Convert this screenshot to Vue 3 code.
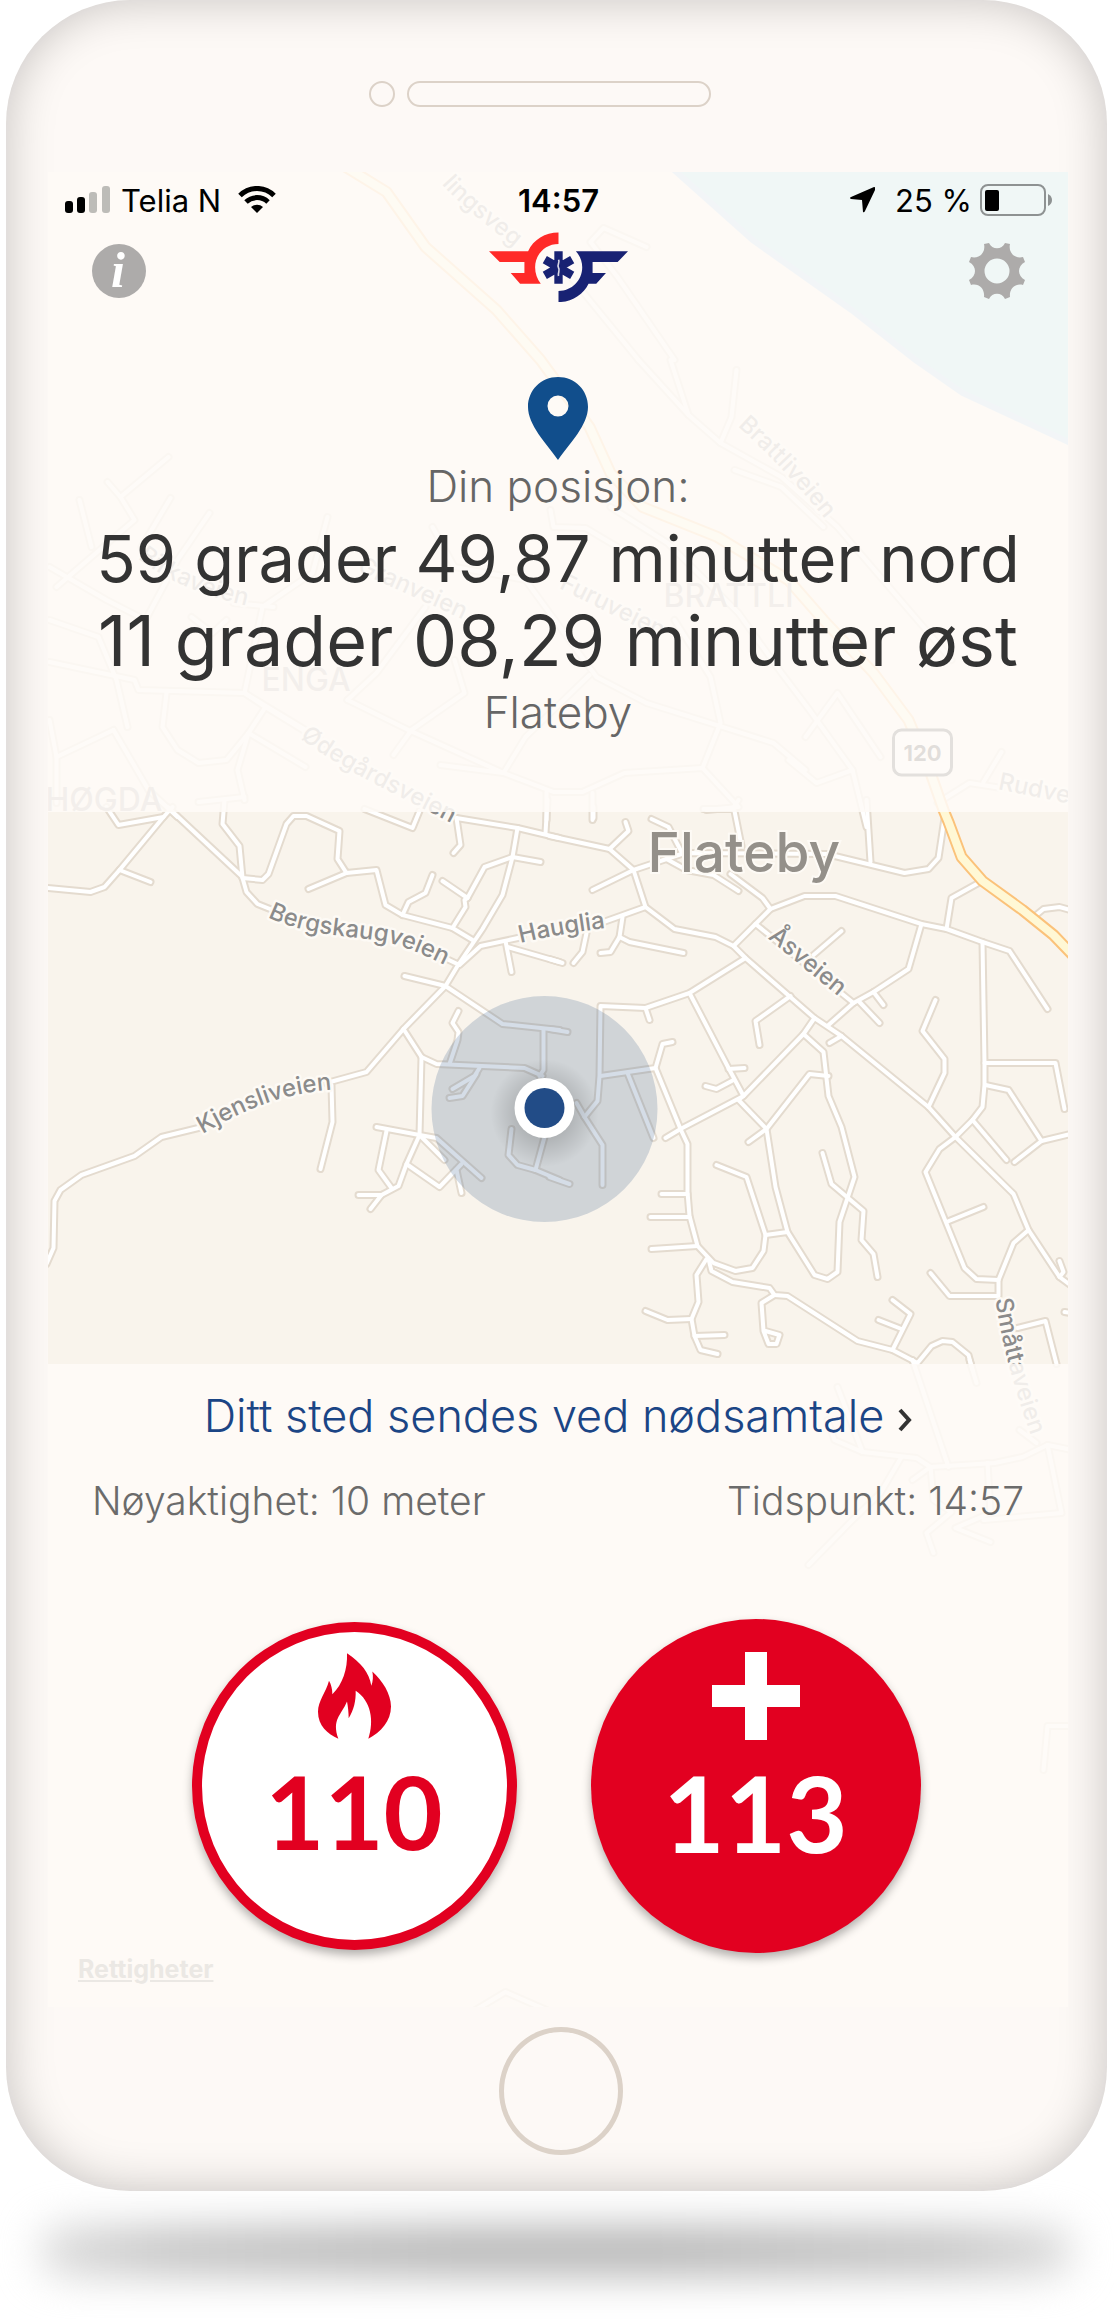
<script setup>
// Each tile keeps its roads in its own survey grid: origin plus scale give map units.
const tiles = [
  {
    x: 40, y: 800, sx: 1 / 3, sy: 0.3699,
    roads: [
      '200,20 238,67 372,47 398,20', '25,237 152,250 195,234 240,190 372,47', '240,190 332,221', '385,20 605,205',
      '555,0 550,65 600,125 610,210 620,250 655,280 700,298',
      '610,210 668,217 687,200 740,65 763,42 800,42 900,84 893,160 920,196 1010,190 1038,285 1088,310 1240,345 1300,378',
      '920,196 808,241', '1088,310 1108,276 1158,252 1180,204', '975,25 1118,77 1140,30', '1250,48 1435,75 1560,102',
      '1250,48 1262,122 1243,143', '1518,90 1525,0',
      '1435,75 1418,153 1388,258 1330,350 1255,450 1218,502 1092,620 982,734 860,765',
      '1502,167 1418,153 1335,180 1285,265 1210,218', '1285,265 1275,270 1278,288 1240,345',
      '1210,425 1260,445 1322,395 1450,370', '1398,380 1417,466', '1405,398 1560,437',
      '1095,477 1218,502 1390,605 1560,622', '1092,620 1147,695 1190,715 1455,725 1510,745', '1511,620 1511,730 1500,745',
      '1256,570 1240,604 1256,628 1255,650 1230,715', '1320,725 1305,745 1238,780', '1310,740 1270,800 1230,806',
      '1147,695 1141,905', '1012,883 1141,905 1190,915 1325,1022', '1141,905 1215,972', '1042,895 1018,1000 1055,1048',
      '1141,905 1100,985 1078,1043 1025,1067 958,1067', '1025,1067 993,1107', '1100,985 1200,1047 1265,985',
      '1250,1000 1267,1063', '875,770 878,870 843,998',
      '490,883 367,912 285,963 127,1013 62,1055 46,1085 42,1212 20,1255',
      '1417,890 1408,960 1435,988 1487,1000 1560,1027', '1515,910 1487,1000',
    ],
  },
  {
    x: 550, y: 800, sx: 0.338, sy: 0.3699,
    roads: [
      '0,97 178,132 248,188 285,290 370,350 490,370 545,395 580,428 785,590 865,637 1120,830 1200,912 1373,1065 1417,1163 1510,1290 1540,1312',
      '178,132 235,85 226,60', '130,48 130,20', '127,242 248,188 345,160 400,142 820,145 1050,197 1120,187 1152,157 1168,50',
      '303,52 352,73 390,140', '345,160 405,190 485,203 560,247', '548,30 568,125', '455,25 540,25 560,0', '937,0 950,168',
      '535,200 630,265 653,295', '545,395 610,335 653,295 755,260 845,260 1100,335 1175,350 1280,383 1362,408 1473,564',
      '1175,350 1190,265 1270,225', '1430,318 1462,295 1510,290 1540,297', '610,335 900,550', '865,353 780,420',
      '160,330 285,290', '215,315 207,370 180,410 150,414', '207,370 238,384 395,414', '108,360 98,410 70,440', '0,430 38,440',
      '1100,335 1063,458 958,520 900,550 825,607', '958,520 988,553', '918,545 977,602',
      '580,428 413,523 285,563 150,557 148,745 142,815 105,857', '285,563 295,595',
      '413,523 530,725 573,800 560,810 643,890 668,1045 705,1168 783,1283 823,1295 853,1275 858,1140 903,1018 865,885 825,800 812,680 750,633',
      '713,530 610,597 622,663', '785,590 750,633 575,800 388,890 343,913', '825,745 770,740 643,890 588,924',
      '530,728 578,725', '545,758 495,780 463,774', '865,637 828,657', '1143,540 1103,625 1168,700 1168,738 1120,830',
      '1280,383 1287,710 1288,770 1280,830 1250,865 1200,912 1155,943 1113,1005 1228,1265 1262,1294 1327,1298 1373,1198 1417,1163',
      '1287,712 1497,712 1525,836', '1290,770 1357,785 1455,922 1540,904', '1455,922 1375,978', '1250,865 1352,973',
      '1175,1140 1285,1100', '1327,1298 1327,1340 1183,1342 1128,1278', '1510,1245 1520,1275 1510,1290',
      '1385,1428 1467,1408 1500,1526', '1525,1385 1540,1388', '0,618 53,627', '150,745 315,725 333,660 365,655',
      '232,738 308,915', '315,725 388,890 407,930 408,1060 413,1125 437,1205 485,1253 550,1274 602,1265 633,1218 638,1175 583,1020 495,986',
      '638,1175 705,1168',
      '470,1240 480,1272 540,1302 652,1318 665,1337 703,1342 910,1462 1015,1488 1088,1522 1130,1475 1162,1462 1193,1466 1240,1500 1250,1540',
      '665,1337 627,1360 632,1435 648,1472 672,1470 680,1445 640,1435', '80,820 105,857 157,932 157,1040', '0,1020 58,1037',
      '330,1066 408,1066', '298,1126 413,1126', '303,1214 437,1205', '465,1240 435,1283 440,1358 420,1403 430,1450 447,1487 497,1497',
      '283,1382 348,1406 420,1403', '430,1450 518,1446', '808,955 835,1037 930,1110 923,1190 960,1228 970,1290',
      '1015,1488 1068,1390 1015,1352', '972,1406 1040,1430',
    ],
  },
  {
    x: 0, y: 360, sx: 0.7105, sy: 1 / 3,
    roads: [
      '900,0 970,165 1015,250 1100,350 1180,500 1300,800 1340,900', '945,0 970,165', '1038,30 1030,170 1015,250',
      '1035,330 1100,380 1160,500', '238,290 170,410 190,480 80,680', '152,365 170,410', '112,420 130,560', '240,415 200,560',
      '70,620 150,720 205,780 250,600 295,460', '70,780 140,830 165,960 180,1100', '70,905 190,960 195,990 345,1000 430,1110',
      '462,470 440,640 370,740 345,1000', '270,770 300,820 320,780', '610,500 640,620 740,660 840,950 910,1030 1090,1150 1135,1230',
      '775,450 780,500 825,505 870,560', '490,1020 530,940 600,740',
      '490,1020 575,1110 710,1240 780,1295 820,1295 880,1240 990,1225 1040,1340 995,1350', '555,1185 580,1110 655,1000 640,900',
      '620,1215 710,1240 740,1130 830,945', '990,1225 1015,1090 1000,950 950,780',
      '860,440 940,550 1040,760 1100,940 1140,1050 1200,1230 1150,1270 1110,1200', '1135,1130 1180,1000 1240,1190',
      '1200,1230 1220,1400', '770,1295 770,1380', '835,1300 835,1380', '345,1000 375,1040 350,1120 430,1220',
      '350,1120 335,1230 345,1320', '375,1040 480,1180', '235,1000 230,1100 250,1170 280,1210 320,1200 350,1120',
      '80,1190 160,1110', '70,1080 80,1190 80,1330', '160,1110 210,1290 250,1370', '280,1325 345,1310',
      '1320,1330 1365,1270 1410,1285', '1385,1265 1410,1175', '385,740 330,730',
    ],
  },
  {
    x: 0, y: 0, sx: 0.7105, sy: 1 / 3,
    roads: ['910,740 850,685 832,725 870,830 950,1080', '800,820 900,1080'],
  },
  {
    x: 0, y: 1360, sx: 0.7105, sy: 1 / 3,
    roads: [
      '1285,0 1335,320', '1365,0 1375,70', '1180,80 1215,275', '1165,180 1175,240 1215,275 1290,295 1310,322 1400,310 1440,290 1475,255 1510,270',
      '1270,290 1240,400 1200,480 1138,615', '1310,322 1315,420 1340,455 1305,520 1315,580', '1310,322 1285,360',
      '1390,310 1395,460 1345,505 1395,545', '1475,255 1495,460 1385,480', '1510,1098 1475,1098 1470,1230', '1435,210 1460,250',
      '670,1950 712,1895 770,1950',
    ],
  },
]

const project = (tile, points) =>
  points
    .split(' ')
    .map((pair) => {
      const [x, y] = pair.split(',').map(Number)
      return `${Math.round(tile.x + x * tile.sx)},${Math.round(tile.y + y * tile.sy)}`
    })
    .join(' ')

const roads = tiles.flatMap((tile) => tile.roads.map((points) => project(tile, points)))

const highway =
  '335,160 387,192 426,247 497,310 541,360 590,427 611,473 643,507 718,537 789,580 824,620 874,673 909,720 930,770 944,810 949,822 962,857 983,881 1023,910 1054,935 1080,962'

const streets = [
  { id: 'bergskaug', name: 'Bergskaugveien', d: 'M268 917 C310 938 365 936 390 943 S425 955 465 975' },
  { id: 'hauglia', name: 'Hauglia', d: 'M521 943 C550 936 580 931 630 925' },
  { id: 'kjensli', name: 'Kjensliveien', d: 'M203 1134 C245 1110 285 1090 350 1089' },
  { id: 'asveien', name: 'Åsveien', d: 'M768 938 L870 1022' },
  { id: 'smatta', name: 'Småttaveien', d: 'M996 1299 C1003 1350 1018 1400 1040 1460' },
  { id: 'odegard', name: 'Ødegårdsveien', d: 'M300 738 C350 775 400 795 480 838' },
  { id: 'lings', name: 'lingsveg', d: 'M442 184 C465 210 495 230 540 268' },
  { id: 'brattli', name: 'Brattliveien', d: 'M738 426 C770 455 800 485 850 550' },
  { id: 'furu', name: 'Furuveien', d: 'M559 588 L700 658' },
  { id: 'gran', name: 'Granveien', d: 'M357 571 L500 636' },
  { id: 'birk', name: 'Birkaveien', d: 'M138 558 C180 590 220 602 300 616' },
  { id: 'rudve', name: 'Rudveien', d: 'M998 789 L1110 812' },
]
</script>

<template>
  <main class="stage">
    <div class="phone">
      <div class="phone-head">
        <span class="camera"></span>
        <span class="speaker"></span>
      </div>

      <section class="screen">
        <svg class="map" viewBox="48 172 1021 1835" preserveAspectRatio="xMidYMid slice" role="img" aria-label="Kart over Flateby">
          <path class="water" d="M669 165 H1080 V450 L1069 442 L963 393 L916 360 L852 310 L753 240 Z" />
          <polyline v-for="(points, i) in roads" :key="'c' + i" class="road-casing" :points="points" />
          <polyline v-for="(points, i) in roads" :key="'r' + i" class="road" :points="points" />
          <polyline class="highway-casing" :points="highway" />
          <polyline class="highway" :points="highway" />
          <g class="shield">
            <rect x="894" y="730" width="58" height="45" rx="8" />
            <text x="923" y="761" text-anchor="middle">120</text>
          </g>
          <g v-for="street in streets" :key="street.id">
            <path :id="street.id" :d="street.d" fill="none" />
            <text class="street"><textPath :href="'#' + street.id">{{ street.name }}</textPath></text>
          </g>
          <text class="district" x="664" y="607">BRATTLI</text>
          <text class="district" x="262" y="691">ENGA</text>
          <text class="district" x="46" y="811">HØGDA</text>
          <text class="town" x="648" y="872">Flateby</text>
          <defs>
            <radialGradient id="dot-shade">
              <stop offset="0.45" stop-color="#000" stop-opacity="0.16" />
              <stop offset="1" stop-color="#000" stop-opacity="0" />
            </radialGradient>
          </defs>
          <circle cx="545" cy="1109" r="113" fill="#2b5488" fill-opacity="0.2" />
          <circle cx="545" cy="1113" r="54" fill="url(#dot-shade)" />
          <circle cx="545" cy="1108" r="30" fill="#fff" />
          <circle cx="545" cy="1108" r="20" fill="#224c87" />
        </svg>

        <div class="panel panel-top">
          <div class="status">
            <div class="status-side">
              <svg width="45" height="28" viewBox="0 0 45 28" aria-hidden="true">
                <rect x="0" y="15" width="8" height="12" rx="3" />
                <rect x="12" y="11" width="8" height="16" rx="3" />
                <rect x="24" y="6" width="8" height="21" rx="3" fill="#bdbcb8" />
                <rect x="37" y="0" width="8" height="27" rx="3" fill="#bdbcb8" />
              </svg>
              <span class="carrier">Telia N</span>
              <svg class="wifi" width="38" height="28" viewBox="0 0 38 28" fill="none" stroke="#000" stroke-width="5" aria-hidden="true">
                <path d="M2 9.500 A24 24 0 0 1 36 9.500" />
                <path d="M8 16 A16 16 0 0 1 30 16" />
                <path d="M19 27 L13 21 A9 9 0 0 1 25 21 Z" fill="#000" stroke="none" />
              </svg>
            </div>
            <time class="clock">14:57</time>
            <div class="status-side status-right">
              <svg width="25" height="26" viewBox="0 0 25 26" aria-hidden="true">
                <path d="M24 0 Q26 0 25 3 L15 24 Q14 26 13 25 L12 13 L1 12 Q-1 11 1 10 Z" />
              </svg>
              <span>25 %</span>
              <svg class="battery" width="72" height="32" viewBox="0 0 72 32" aria-hidden="true">
                <rect x="1" y="1" width="64" height="30" rx="7" fill="none" stroke="#8e9292" stroke-width="2" />
                <rect x="5" y="6" width="14" height="21" rx="2" />
                <path d="M68 10 Q72 12 72 16 T68 22 Z" fill="#8e9292" />
              </svg>
            </div>
          </div>

          <div class="toolbar">
            <button class="icon-button" type="button" aria-label="Informasjon">
              <svg width="56" height="56" viewBox="0 0 56 56">
                <circle cx="28" cy="28" r="27" fill="#adabaa" />
                <text x="27" y="44" text-anchor="middle" class="info-letter">i</text>
              </svg>
            </button>
            <svg class="logo" width="139" height="70" viewBox="88 66 416 208" role="img" aria-label="Norsk Luftambulanse">
              <path fill="#ff2a28" d="M88 123 H205 C221 88 256 67 296 67 V101 C256 101 226 132 226 171 C226 190 232 206 243 220 H181 L153 188 H194 V155 H120 Z" />
              <path fill="#182273" d="M504 123 H348 C360 136 367 153 367 171 C367 210 336 242 296 242 V275 C337 275 370 252 386 220 H409 L438 188 H398 V155 H473 Z" />
              <g stroke="#182273" stroke-width="25">
                <path d="M296 123 V220 M255 148 L337 195 M255 195 L337 148" />
              </g>
              <path d="M296 148 C302 156 290 163 296 172 S293 186 296 197" fill="none" stroke="#d9d9e6" stroke-width="5" />
            </svg>
            <button class="icon-button icon-right" type="button" aria-label="Innstillinger">
              <svg width="56" height="56" viewBox="-28 -28 56 56">
                <path fill="#adabaa" fill-rule="evenodd" d="M-13 -27 L-8 -28 C-5 -21 5 -21 8 -28 L13 -27 C11 -18 18 -12 26 -14 L28 -9 C20 -5 20 5 28 9 L26 14 C18 12 12 18 13 26 L8 28 C5 21 -5 21 -8 28 L-13 26 C-12 18 -18 12 -26 14 L-28 9 C-20 5 -20 -5 -28 -9 L-26 -14 C-18 -12 -11 -18 -13 -27 Z M0 -12.500 A12.500 12.500 0 1 0 0 12.500 A12.500 12.500 0 1 0 0 -12.500 Z" />
              </svg>
            </button>
          </div>

          <div class="position">
            <svg width="60" height="83" viewBox="0 0 60 83" aria-hidden="true">
              <path fill="#114e8c" fill-rule="evenodd" d="M30 0 C13 0 0 13 0 30 C0 48 18 66 30 83 C42 66 60 48 60 30 C60 13 47 0 30 0 Z M30 18.500 A10.500 10.500 0 1 1 30 39.500 A10.500 10.500 0 1 1 30 18.500 Z" />
            </svg>
            <p class="caption">Din posisjon:</p>
            <p class="latitude">59 grader 49,87 minutter nord</p>
            <p class="longitude">11 grader 08,29 minutter øst</p>
            <p class="caption place">Flateby</p>
          </div>
        </div>

        <div class="map-window"></div>

        <div class="panel panel-bottom">
          <a class="send-link" href="#">
            <span>Ditt sted sendes ved nødsamtale</span>
            <svg width="14" height="24" viewBox="0 0 14 24" fill="none" stroke="#333" stroke-width="4" aria-hidden="true">
              <path d="M2 2 L11 12 L2 22" />
            </svg>
          </a>
          <div class="details">
            <span>Nøyaktighet: 10 meter</span>
            <span>Tidspunkt: 14:57</span>
          </div>
          <div class="calls">
            <button class="call call-fire" type="button">
              <svg width="73" height="86" viewBox="411 127 219 257" aria-hidden="true">
                <path fill="#e20020" d="M498 127 C540 155 565 185 571 225 C576 210 577 197 574 182 C605 210 630 250 630 287 C630 330 600 364 562 384 C580 330 570 270 524 240 C525 270 518 300 503 322 C503 305 501 288 498 272 C480 315 452 325 472 384 C440 370 411 345 411 303 C411 270 435 245 444 210 C451 222 454 236 454 250 C485 220 500 175 498 127 Z" />
              </svg>
              <span>110</span>
            </button>
            <button class="call call-medical" type="button">
              <svg width="88" height="88" viewBox="0 0 88 88" aria-hidden="true">
                <path fill="#fff" d="M33 0 H55 V33 H88 V55 H55 V88 H33 V55 H0 V33 H33 Z" />
              </svg>
              <span>113</span>
            </button>
          </div>
          <a class="rights" href="#">Rettigheter</a>
        </div>
      </section>

      <div class="phone-foot">
        <span class="home"></span>
      </div>
    </div>
    <div class="ground-shadow"></div>
  </main>
</template>

<style>
body {
  margin: 0;
  background: #fff;
}
</style>

<style scoped>
.stage {
  padding: 0 7px 44px 6px;
  overflow: hidden;
  font-family: Inter, "Noto Sans", sans-serif;
}
.phone {
  border-radius: 124px;
  background: #fdf9f6;
  box-shadow: inset 0 0 48px rgba(0, 0, 0, 0.22);
}
.phone-head {
  display: flex;
  justify-content: center;
  gap: 12px;
  padding: 81px 34px 65px 0;
}
.camera,
.speaker {
  box-sizing: border-box;
  height: 26px;
  border: 2px solid #dcd2c8;
  border-radius: 13px;
}
.camera {
  width: 26px;
}
.speaker {
  width: 304px;
}
.screen {
  position: relative;
  margin: 0 39px 0 42px;
  overflow: hidden;
  background: #f9f4ec;
}
.map {
  position: absolute;
  inset: 0;
  width: 100%;
  height: 100%;
}
.water {
  fill: #89d9ee;
  stroke: #9fcdf5;
  stroke-width: 6px;
}
.road-casing,
.road,
.highway-casing,
.highway {
  fill: none;
  stroke-linecap: round;
  stroke-linejoin: round;
}
.road-casing {
  stroke: #e4dbcf;
  stroke-width: 8px;
}
.road {
  stroke: #fff;
  stroke-width: 4px;
}
.highway-casing {
  stroke: #fbc27a;
  stroke-width: 12px;
}
.highway {
  stroke: #fff8d5;
  stroke-width: 8px;
}
.street {
  fill: #8b8b8b;
  stroke: #fdfaf5;
  stroke-width: 5px;
  stroke-linejoin: round;
  paint-order: stroke;
  font-size: 24px;
  font-weight: 500;
}
.district {
  fill: #a39e98;
  font-size: 32px;
  font-weight: 500;
}
.town {
  fill: #94908a;
  stroke: #fdfaf5;
  stroke-width: 4px;
  paint-order: stroke;
  font-size: 55px;
  font-weight: 500;
}
.shield rect {
  fill: #fff;
  stroke: #222;
  stroke-width: 3px;
}
.shield text {
  fill: #111;
  font-size: 22px;
  font-weight: 700;
}
.panel {
  position: relative;
  background: rgba(254, 250, 247, 0.88);
}
.panel-top {
  padding-bottom: 72px;
}
.status {
  display: grid;
  grid-template-columns: 1fr auto 1fr;
  align-items: center;
  height: 56px;
  padding: 0 16px 0 17px;
  font-size: 31px;
}
.status-side {
  display: flex;
  align-items: center;
}
.status-right {
  justify-content: flex-end;
}
.carrier {
  margin: 0 17px 0 11px;
}
.clock {
  font-weight: 600;
}
.status-right span {
  margin: 0 8px 0 20px;
}
.toolbar {
  display: grid;
  grid-template-columns: 1fr auto 1fr;
  align-items: end;
  padding: 4px 43px 0;
}
.icon-button {
  justify-self: start;
  padding: 0 0 3px;
  border: 0;
  background: none;
}
.icon-button svg,
.logo {
  display: block;
}
.icon-right {
  justify-self: end;
}
.info-letter {
  fill: #fff;
  font: italic 700 50px "Liberation Serif", serif;
}
.position {
  display: flex;
  flex-direction: column;
  align-items: center;
  padding-top: 75px;
  white-space: nowrap;
}
.position p {
  margin: 0;
}
.position .caption {
  color: #666;
  font-size: 44px;
  font-weight: 300;
  line-height: 52px;
}
.position .latitude {
  margin-top: 8px;
  color: #333;
  font-size: 65px;
  line-height: 78px;
}
.position .longitude {
  color: #333;
  font-size: 70px;
  line-height: 86px;
}
.position .place {
  line-height: 56px;
}
.map-window {
  height: 552px;
}
.panel-bottom {
  padding: 22px 0;
}
.send-link {
  display: flex;
  align-items: center;
  justify-content: center;
  gap: 14px;
  color: #1b4585;
  font-size: 45px;
  font-weight: 300;
  line-height: 60px;
  text-decoration: none;
  white-space: nowrap;
}
.send-link svg {
  margin-top: 8px;
}
.details {
  display: flex;
  justify-content: space-between;
  margin-top: 31px;
  padding: 0 44px;
  color: #6b6b6b;
  font-size: 39px;
  font-weight: 300;
  line-height: 48px;
}
.calls {
  display: flex;
  align-items: center;
  justify-content: center;
  gap: 74px;
  margin-top: 94px;
  padding-right: 4px;
}
.call {
  box-sizing: border-box;
  display: flex;
  flex-direction: column;
  align-items: center;
  border-radius: 50%;
  font-family: Lato, sans-serif;
  font-weight: 700;
  line-height: 120px;
  box-shadow: 0 5px 10px rgba(0, 0, 0, 0.3);
}
.call span {
  margin-top: 12px;
}
.call-fire {
  width: 325px;
  height: 328px;
  padding: 21px 0 0;
  border: 10px solid #e20020;
  background: #fff;
  color: #e20020;
  font-size: 102px;
}
.call-medical {
  width: 330px;
  height: 334px;
  padding: 33px 0 0;
  border: 0;
  background: #e20020;
  color: #fff;
  font-size: 106px;
}
.rights {
  display: block;
  width: max-content;
  margin-left: 30px;
  color: #ebe8e4;
  font-size: 25px;
  font-weight: 700;
  line-height: 32px;
}
.phone-foot {
  display: flex;
  justify-content: center;
  padding: 20px 0 36px 8px;
}
.home {
  box-sizing: border-box;
  width: 124px;
  height: 128px;
  border: 5px solid #dcd2c8;
  border-radius: 50%;
}
.ground-shadow {
  height: 48px;
  margin: 36px 34px 0;
  border-radius: 24px;
  background: linear-gradient(90deg, #dcdcdc, #c4c4c4 12%, #b4b4b4 40%, #b4b4b4 60%, #c4c4c4 88%, #dcdcdc);
  filter: blur(20px);
}
</style>
